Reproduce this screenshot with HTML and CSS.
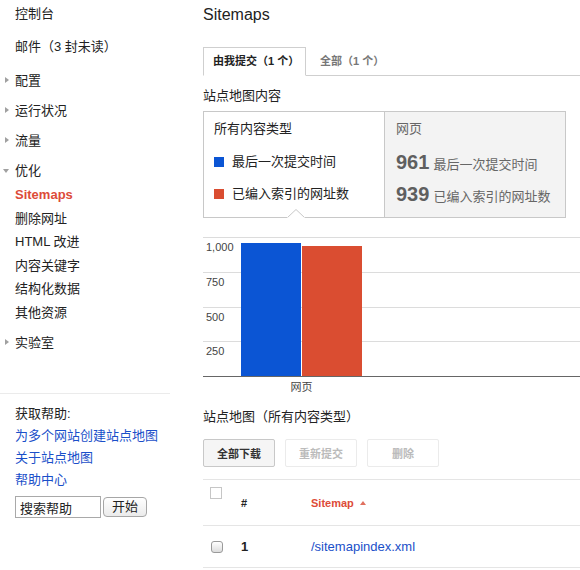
FILE: index.html
```html
<!DOCTYPE html>
<html lang="zh-CN">
<head>
<meta charset="utf-8">
<title>Sitemaps</title>
<link rel="stylesheet" href="styles.css">
</head>
<body>
<div class="page">
  <aside class="sidebar">
    <nav class="nav">
      <div class="nav-home">控制台</div>
      <div class="nav-home nav-mail">邮件（3 封未读）</div>
      <div class="nav-sections">
        <div class="nav-sec"><span class="caret caret-right"></span>配置</div>
        <div class="nav-sec"><span class="caret caret-right"></span>运行状况</div>
        <div class="nav-sec"><span class="caret caret-right"></span>流量</div>
        <div class="nav-sec"><span class="caret caret-down"></span>优化</div>
      </div>
      <ul class="sub">
        <li class="sub-item active">Sitemaps</li>
        <li class="sub-item">删除网址</li>
        <li class="sub-item">HTML 改进</li>
        <li class="sub-item">内容关键字</li>
        <li class="sub-item">结构化数据</li>
        <li class="sub-item">其他资源</li>
      </ul>
      <div class="nav-sec nav-lab"><span class="caret caret-right"></span>实验室</div>
    </nav>
    <div class="divider"></div>
    <div class="help">
      <div class="help-title">获取帮助:</div>
      <a class="help-link" href="#">为多个网站创建站点地图</a>
      <a class="help-link" href="#">关于站点地图</a>
      <a class="help-link" href="#">帮助中心</a>
      <div class="search">
        <input class="search-input" type="text" value="搜索帮助">
        <button class="search-btn" type="button">开始</button>
      </div>
    </div>
  </aside>

  <main class="main">
    <h1 class="title">Sitemaps</h1>
    <div class="tabs">
      <div class="tab active">由我提交（1 个）</div>
      <div class="tab">全部（1 个）</div>
    </div>

    <h2 class="section-title">站点地图内容</h2>
    <div class="summary">
      <div class="summary-left">
        <div class="summary-row summary-head">所有内容类型</div>
        <div class="summary-row"><span class="swatch swatch-blue"></span>最后一次提交时间</div>
        <div class="summary-row"><span class="swatch swatch-red"></span>已编入索引的网址数</div>
        <svg class="notch" width="18" height="9" viewBox="0 0 18 9">
          <rect x="0" y="7" width="18" height="2" fill="#fff"/>
          <polyline points="0.5,8.5 9,0.5 17.5,8.5" fill="#fff" stroke="#c8c8c8" stroke-width="1"/>
        </svg>
      </div>
      <div class="summary-right">
        <div class="summary-row summary-type">网页</div>
        <div class="summary-row"><span class="num">961</span> 最后一次提交时间</div>
        <div class="summary-row"><span class="num">939</span> 已编入索引的网址数</div>
      </div>
    </div>

    <div class="chart">
      <div class="plot">
        <div class="band">1,000</div>
        <div class="band">750</div>
        <div class="band">500</div>
        <div class="band">250</div>
        <div class="bar bar-blue" style="height:133px"></div>
        <div class="bar bar-red" style="height:130px"></div>
      </div>
      <div class="xlabels">网页</div>
    </div>

    <h2 class="section-title">站点地图（所有内容类型）</h2>
    <div class="actions">
      <button class="btn" type="button">全部下载</button>
      <button class="btn btn-disabled" type="button">重新提交</button>
      <button class="btn btn-disabled" type="button">删除</button>
    </div>

    <div class="table">
      <div class="trow thead">
        <span class="cb cb-head"></span>
        <span class="th">#</span>
        <span class="th th-sort">Sitemap<span class="sort-up"></span></span>
      </div>
      <div class="trow tbody-row">
        <span class="cb cb-row"></span>
        <span class="td-num">1</span>
        <a class="td-link" href="#">/sitemapindex.xml</a>
      </div>
    </div>
  </main>
</div>
</body>
</html>
```

FILE: styles.css
```css
* { box-sizing: border-box; }

html, body {
  margin: 0;
  padding: 0;
  background: #fff;
}

body {
  font-family: "Liberation Sans", "Noto Sans CJK SC", sans-serif;
  font-size: 13px;
  color: #222;
  width: 580px;
  height: 570px;
  overflow: hidden;
}

.page {
  display: flex;
  align-items: flex-start;
}

/* ---------- sidebar ---------- */
.sidebar {
  flex: 0 0 203px;
  width: 203px;
}

.nav-home {
  padding-left: 15px;
  line-height: 28px;
  height: 28px;
}

.nav-mail {
  margin-top: 5px;
}

.nav-sections {
  margin-top: 5px;
}

.nav-sec {
  display: flex;
  align-items: center;
  height: 30px;
  line-height: 30px;
}

.caret {
  flex: 0 0 15px;
  width: 15px;
  height: 8px;
  position: relative;
}

.caret-right::before {
  content: "";
  position: absolute;
  left: 5px;
  top: 0;
  border-left: 4px solid #a0a0a0;
  border-top: 3.5px solid transparent;
  border-bottom: 3.5px solid transparent;
}

.caret-down::before {
  content: "";
  position: absolute;
  left: 3px;
  top: 2px;
  border-top: 4px solid #a0a0a0;
  border-left: 3.5px solid transparent;
  border-right: 3.5px solid transparent;
}

.sub {
  list-style: none;
  margin: -3px 0 0 0;
  padding: 0;
}

.sub-item {
  padding-left: 15px;
  line-height: 23.5px;
  height: 23.5px;
}

.sub-item.active {
  color: #dd4b39;
  font-weight: bold;
}

.nav-lab {
  margin-top: 4px;
}

.divider {
  margin-top: 35px;
  width: 170px;
  height: 1px;
  background: #ebebeb;
}

.help {
  padding-left: 15px;
}

.help-title {
  margin-top: 9px;
  line-height: 22px;
}

.help-link {
  display: block;
  line-height: 22px;
  color: #1a4fc9;
  text-decoration: none;
}

.search {
  display: flex;
  align-items: center;
  margin-top: 5px;
  height: 22px;
}

.search-input {
  width: 86px;
  height: 22px;
  margin: 0;
  padding: 0 4px;
  border: 1px solid #a9a9a9;
  font-family: "Liberation Sans", "Noto Sans CJK SC", sans-serif;
  font-size: 13px;
  color: #222;
  background: #fff;
  outline: none;
}

.search-btn {
  margin: 0 0 0 2px;
  width: 44px;
  height: 20px;
  padding: 0;
  border: 1px solid #a6a6a6;
  border-radius: 4px;
  background: linear-gradient(#ffffff, #ebebeb);
  font-family: "Liberation Sans", "Noto Sans CJK SC", sans-serif;
  font-size: 13px;
  line-height: 18px;
  color: #222;
}

/* ---------- main ---------- */
.main {
  flex: 0 0 377px;
  width: 377px;
}

.title {
  margin: 0;
  font-size: 16px;
  font-weight: normal;
  line-height: 30px;
  height: 30px;
  color: #222;
}

.tabs {
  display: flex;
  margin-top: 17px;
  height: 29px;
  border-bottom: 1px solid #cfcfcf;
}

.tab {
  height: 29px;
  line-height: 27px;
  padding: 0 9px;
  font-size: 11px;
  font-weight: bold;
  color: #777;
  border: 1px solid transparent;
  margin-bottom: -1px;
}

.tab + .tab {
  margin-left: 4px;
}

.tab.active {
  width: 103px;
  padding: 0 0 0 9px;
  white-space: nowrap;
  overflow: hidden;
  color: #222;
  background: #fff;
  border-color: #cfcfcf;
  border-bottom-color: #fff;
}

.section-title {
  margin: 10px 0 0 0;
  font-size: 13px;
  font-weight: normal;
  line-height: 20px;
  color: #222;
}

/* summary box */
.summary {
  display: flex;
  width: 363px;
  height: 107px;
  margin-top: 5px;
  border: 1px solid #c8c8c8;
}

.summary-left,
.summary-right {
  display: flex;
  flex-direction: column;
  gap: 12.5px;
  padding-top: 7px;
}

.summary-left {
  position: relative;
  flex: 0 0 180px;
  padding-left: 10px;
  background: #fff;
}

.summary-right {
  flex: 1;
  padding-left: 11px;
  background: #f3f3f3;
  border-left: 1px solid #c8c8c8;
  color: #666;
}

.summary-row {
  display: flex;
  align-items: center;
  height: 20px;
  line-height: 20px;
  white-space: nowrap;
}

.summary-right .summary-row {
  align-items: baseline;
}

.summary-head {
  color: #222;
}

.summary-type {
  color: #666;
}

.swatch {
  flex: 0 0 10px;
  width: 10px;
  height: 10px;
  margin-right: 8px;
}

.swatch-blue { background: #0b55d4; }
.swatch-red { background: #da4d31; }

.num {
  font-size: 20px;
  font-weight: bold;
  color: #5f5f5f;
  margin-right: 4px;
}

.notch {
  position: absolute;
  left: 83px;
  bottom: -1px;
  display: block;
}

/* chart */
.chart {
  margin-top: 19px;
}

.plot {
  position: relative;
  border-bottom: 1px solid #666;
}

.band {
  height: 34.75px;
  border-top: 1px solid #dcdcdc;
  padding: 2px 0 0 3px;
  font-size: 11px;
  line-height: 14px;
  color: #444;
}

.bar {
  position: absolute;
  bottom: 0;
  width: 60px;
}

.bar-blue {
  left: 38px;
  background: #0b55d4;
}

.bar-red {
  left: 99px;
  background: #da4d31;
}

.xlabels {
  width: 159px;
  padding-left: 38px;
  text-align: center;
  font-size: 11px;
  line-height: 20px;
  color: #444;
}

.chart + .section-title {
  margin-top: 10px;
}

/* actions */
.actions {
  display: flex;
  gap: 10px;
  margin-top: 12px;
}

.btn {
  width: 72px;
  height: 28px;
  margin: 0;
  padding: 0;
  border: 1px solid #c8c8c8;
  border-radius: 2px;
  background: #f5f5f5;
  font-family: "Liberation Sans", "Noto Sans CJK SC", sans-serif;
  font-size: 11px;
  font-weight: bold;
  color: #333;
}

.btn-disabled {
  background: #fff;
  border-color: #ebebeb;
  color: #bbb;
}

/* table */
.table {
  margin-top: 12px;
  border-top: 1px solid #e5e5e5;
}

.trow {
  display: grid;
  grid-template-columns: 38px 70px 1fr;
  align-items: center;
  border-bottom: 1px solid #e5e5e5;
}

.thead {
  height: 46px;
}

.tbody-row {
  height: 42px;
}

.cb {
  display: block;
  width: 12px;
  height: 12px;
}

.cb-head {
  align-self: start;
  margin: 7px 0 0 7px;
  border: 1px solid #c6c6c6;
  background: #fff;
}

.cb-row {
  margin-left: 8px;
  border: 1px solid #9a9a9a;
  border-radius: 3px;
  background: linear-gradient(#ffffff, #dcdcdc);
}

.th {
  font-size: 11px;
  font-weight: bold;
  color: #222;
  line-height: 16px;
}

.th-sort {
  display: flex;
  align-items: center;
  color: #dd4b39;
}

.sort-up {
  display: block;
  margin-left: 6px;
  border-bottom: 4px solid #e0705e;
  border-left: 3.5px solid transparent;
  border-right: 3.5px solid transparent;
}

.td-num {
  font-size: 13px;
  font-weight: bold;
  color: #222;
}

.td-link {
  font-size: 13px;
  color: #1a4fc9;
  text-decoration: none;
}
```
